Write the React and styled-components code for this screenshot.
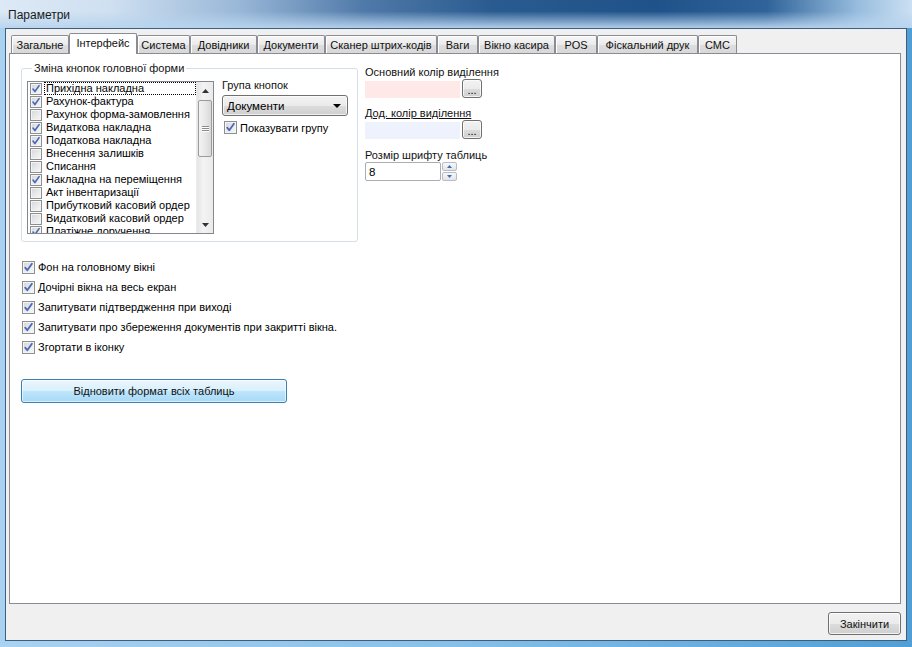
import React from "react";
import styled, { createGlobalStyle } from "styled-components";

const GlobalStyle = createGlobalStyle`
  html, body { margin: 0; padding: 0; }
  body {
    width: 912px;
    height: 647px;
    overflow: hidden;
    font-family: "Liberation Sans", Arial, sans-serif;
    font-size: 11px;
    color: #000;
  }
  * { box-sizing: border-box; }
`;

const Window = styled.div`
  width: 912px;
  height: 647px;
  display: flex;
  flex-direction: column;
  padding: 0 5px 6px 5px;
  background: linear-gradient(90deg, #a9d2f1 0%, #86c0ea 50%, #4f9fd6 100%);
`;

const TitleBar = styled.div`
  height: 28px;
  margin: 0 -5px;
  padding: 1px 8px 0;
  display: flex;
  align-items: center;
  font-size: 12px;
  color: #1a1a1a;
  background:
    linear-gradient(180deg, rgba(255,255,255,0) 0%, rgba(255,255,255,0) 40%, rgba(184,212,238,0.95) 100%),
    linear-gradient(90deg, #dde9f5 0%, #cfe0f1 12%, #9ab8d8 26%, #4f79a8 40%, #2a5b90 54%, #1f5289 72%, #2f6399 84%, #97bcde 94%, #cbe0f2 100%);
`;

const Client = styled.div`
  flex: 1;
  display: flex;
  flex-direction: column;
  border: 1px solid #3f5e7e;
  background: #f0f0f0;
  padding: 4px 5px 0 3px;
`;

const TabStrip = styled.div`
  display: flex;
  align-items: flex-end;
  height: 20px;
  padding-left: 2px;
`;

const Tab = styled.div`
  width: ${p => p.w}px;
  height: ${p => (p.active ? 21 : 18)}px;
  margin-bottom: ${p => (p.active ? -1 : 0)}px;
  position: relative;
  z-index: ${p => (p.active ? 1 : 0)};
  display: flex;
  align-items: center;
  justify-content: center;
  padding-bottom: ${p => (p.active ? 2 : 0)}px;
  border: 1px solid #898c95;
  border-bottom: none;
  border-radius: 2px 2px 0 0;
  white-space: nowrap;
  color: #111;
  background: ${p =>
    p.active
      ? "#ffffff"
      : "linear-gradient(180deg, #f7f7f7 0%, #ebebeb 50%, #dedede 51%, #d8d8d8 100%)"};
  box-shadow: ${p => (p.active ? "none" : "inset 1px 1px 0 #ffffff")};
`;

const Panel = styled.div`
  flex: 1;
  border: 1px solid #898c95;
  background: #fff;
  display: flex;
  flex-direction: column;
`;

const TopRow = styled.div`
  display: flex;
  align-items: flex-start;
  padding: 8px 0 0 11px;
`;

const GroupBox = styled.fieldset`
  width: 337px;
  margin: 0;
  padding: 6px 5px 7px 5px;
  border: 1px solid #d5dfe5;
  border-radius: 3px;
  display: flex;
  align-items: flex-start;
`;

const Legend = styled.legend`
  margin-left: 5px;
  padding: 0 2px;
  font-size: 11px;
  line-height: 13px;
  color: #111;
`;

const ListBox = styled.div`
  width: 187px;
  height: 153px;
  border: 1px solid #828790;
  display: flex;
  overflow: hidden;
`;

const ListItems = styled.div`
  flex: 1;
  padding: 0 0 0 2px;
  overflow: hidden;
`;

const ListRow = styled.div`
  height: 13px;
  display: flex;
  align-items: center;
  gap: 2px;
  white-space: nowrap;
`;

const ItemText = styled.span`
  flex: 1;
  height: 13px;
  line-height: 11px;
  padding-left: 1px;
  border: 1px ${p => (p.focused ? "dotted #000" : "solid transparent")};
`;

const ScrollBar = styled.div`
  width: 17px;
  display: flex;
  flex-direction: column;
  background: linear-gradient(90deg, #e5e5e5, #f3f3f3 40%, #eaeaea);
  border-left: 1px solid #ececec;
`;

const ScrollArrow = styled.div`
  height: 17px;
  display: flex;
  align-items: center;
  justify-content: center;
`;

const ScrollTrack = styled.div`
  flex: 1;
  padding: 1px 1px;
`;

const ScrollThumb = styled.div`
  height: 57px;
  border: 1px solid #9b9b9b;
  border-radius: 2px;
  background: linear-gradient(90deg, #f3f3f3 0%, #e8e8e8 50%, #d9d9d9 100%);
  display: flex;
  flex-direction: column;
  align-items: center;
  justify-content: center;
  gap: 1px;
`;

const Grip = styled.div`
  width: 7px;
  height: 1px;
  background: #8c8c8c;
  box-shadow: 0 1px 0 #fff;
`;

const MiddleCol = styled.div`
  margin-left: 8px;
  margin-top: -2px;
  display: flex;
  flex-direction: column;
`;

const FieldLabel = styled.div`
  height: 13px;
  line-height: 13px;
  white-space: nowrap;
  color: #111;
  text-decoration: ${p => (p.underline ? "underline" : "none")};
`;

const Combo = styled.div`
  width: 126px;
  height: 21px;
  margin-top: 3px;
  border: 1px solid #707070;
  border-radius: 3px;
  padding: 0 6px 0 4px;
  display: flex;
  align-items: center;
  justify-content: space-between;
  font-size: 11.5px;
  background: linear-gradient(180deg, #f2f2f2 0%, #ebebeb 50%, #dddddd 51%, #cfcfcf 100%);
  box-shadow: inset 0 0 0 1px rgba(255,255,255,0.7);
`;

const CheckRow = styled.div`
  display: flex;
  align-items: center;
  gap: 3px;
  height: ${p => p.h || 13}px;
  margin-top: ${p => p.mt || 0}px;
  margin-left: ${p => p.ml || 0}px;
  white-space: nowrap;
`;

const Box = styled.span`
  width: ${p => p.size}px;
  height: ${p => p.size}px;
  flex: none;
  border: 1px solid #8e8f8f;
  background: linear-gradient(135deg, #d3d5d8 0%, #e9eaeb 55%, #f7f7f7 100%);
  box-shadow: inset 0 0 0 1px #f4f4f4;
  display: flex;
  align-items: center;
  justify-content: center;
`;

const RightCol = styled.div`
  margin-left: 7px;
  margin-top: 4px;
  display: flex;
  flex-direction: column;
`;

const ColorRow = styled.div`
  display: flex;
  align-items: flex-end;
  gap: 2px;
  margin-bottom: ${p => p.mb || 0}px;
`;

const Swatch = styled.div`
  width: 95px;
  height: 17px;
  background: ${p => p.color};
`;

const SmallButton = styled.div`
  width: 20px;
  height: 19px;
  border: 1px solid #707070;
  border-radius: 3px;
  display: flex;
  align-items: flex-end;
  justify-content: center;
  padding-bottom: 3px;
  font-size: 11px;
  line-height: 8px;
  background: linear-gradient(180deg, #f2f2f2 0%, #ebebeb 50%, #dddddd 51%, #cfcfcf 100%);
  box-shadow: inset 0 0 0 1px rgba(255,255,255,0.75);
`;

const SpinRow = styled.div`
  display: flex;
  gap: 1px;
  margin-top: 0;
`;

const SpinInput = styled.div`
  width: 76px;
  height: 19px;
  border: 1px solid #abadb3;
  border-radius: 2px;
  padding-left: 3px;
  display: flex;
  align-items: center;
  font-size: 11.5px;
`;

const SpinButtons = styled.div`
  display: flex;
  flex-direction: column;
  gap: 1px;
`;

const SpinBtn = styled.div`
  width: 15px;
  height: 9px;
  border: 1px solid #b8bcc4;
  border-radius: 2px;
  background: linear-gradient(180deg, #f8f8f8, #e2e4e8);
  display: flex;
  align-items: center;
  justify-content: center;
`;

const Options = styled.div`
  margin-top: 15px;
  padding-left: 12px;
  display: flex;
  flex-direction: column;
`;

const WideButton = styled.div`
  width: 266px;
  height: 24px;
  margin: 22px 0 0 11px;
  border: 1px solid #3c7fb1;
  border-radius: 3px;
  display: flex;
  align-items: center;
  justify-content: center;
  font-size: 11px;
  color: #111;
  background: linear-gradient(180deg, #eaf6fd 0%, #d9f0fc 50%, #bee6fd 51%, #a7d9f5 100%);
  box-shadow: inset 0 0 0 1px rgba(255,255,255,0.6);
`;

const Footer = styled.div`
  height: 36px;
  display: flex;
  justify-content: flex-end;
  align-items: flex-start;
  padding-top: 8px;
`;

const DialogButton = styled.div`
  width: 73px;
  height: 23px;
  border: 1px solid #707070;
  border-radius: 3px;
  display: flex;
  align-items: center;
  justify-content: center;
  font-size: 11px;
  color: #111;
  background: linear-gradient(180deg, #f2f2f2 0%, #ebebeb 50%, #dddddd 51%, #cfcfcf 100%);
  box-shadow: inset 0 0 0 1px rgba(255,255,255,0.75);
`;

const tabs = [
  ["Загальне", 58],
  ["Інтерфейс", 68, true],
  ["Система", 53],
  ["Довідники", 67],
  ["Документи", 68],
  ["Сканер штрих-кодів", 112],
  ["Ваги", 41],
  ["Вікно касира", 77],
  ["POS", 42],
  ["Фіскальний друк", 101],
  ["СМС", 39],
];

const listItems = [
  ["Прихідна накладна", true],
  ["Рахунок-фактура", true],
  ["Рахунок форма-замовлення", false],
  ["Видаткова накладна", true],
  ["Податкова накладна", true],
  ["Внесення залишків", false],
  ["Списання", false],
  ["Накладна на переміщення", true],
  ["Акт інвентаризації", false],
  ["Прибутковий касовий ордер", false],
  ["Видатковий касовий ордер", false],
  ["Платіжне доручення", true],
];

const options = [
  "Фон на головному вікні",
  "Дочірні вікна на весь екран",
  "Запитувати підтвердження при виході",
  "Запитувати про збереження документів при закритті вікна.",
  "Згортати в іконку",
];

function CheckBox({ checked, size = 13 }) {
  return (
    <Box size={size}>
      {checked && (
        <svg width={size - 2} height={size - 2} viewBox="0 0 11 11">
          <path d="M2.2 5.6 L4.3 8.3 L8.9 1.8" fill="none" stroke="#4a68b8" strokeWidth="1.8" strokeLinecap="round" strokeLinejoin="round" />
        </svg>
      )}
    </Box>
  );
}

function Triangle({ up, color = "#000", w = 7, h = 4 }) {
  return (
    <svg width={w} height={h} viewBox={`0 0 ${w} ${h}`}>
      <polygon points={up ? `0,${h} ${w / 2},0 ${w},${h}` : `0,0 ${w},0 ${w / 2},${h}`} fill={color} />
    </svg>
  );
}

export default function App() {
  return (
    <>
      <GlobalStyle />
      <Window>
        <TitleBar>Параметри</TitleBar>
        <Client>
          <TabStrip>
            {tabs.map(([name, w, active]) => (
              <Tab key={name} w={w} active={active}>{name}</Tab>
            ))}
          </TabStrip>
          <Panel>
            <TopRow>
              <GroupBox>
                <Legend>Зміна кнопок головної форми</Legend>
                <ListBox>
                  <ListItems>
                    {listItems.map(([name, checked], i) => (
                      <ListRow key={name}>
                        <CheckBox checked={checked} size={12} />
                        <ItemText focused={i === 0}>{name}</ItemText>
                      </ListRow>
                    ))}
                  </ListItems>
                  <ScrollBar>
                    <ScrollArrow><Triangle up color="#333" /></ScrollArrow>
                    <ScrollTrack>
                      <ScrollThumb>
                        <Grip /><Grip /><Grip />
                      </ScrollThumb>
                    </ScrollTrack>
                    <ScrollArrow><Triangle color="#333" /></ScrollArrow>
                  </ScrollBar>
                </ListBox>
                <MiddleCol>
                  <FieldLabel>Група кнопок</FieldLabel>
                  <Combo>
                    <span>Документи</span>
                    <Triangle w={8} h={4} />
                  </Combo>
                  <CheckRow mt={5} ml={2}>
                    <CheckBox checked />
                    <span>Показувати групу</span>
                  </CheckRow>
                </MiddleCol>
              </GroupBox>
              <RightCol>
                <FieldLabel>Основний колір виділення</FieldLabel>
                <ColorRow mb={9}>
                  <Swatch color="#ffe8e8" />
                  <SmallButton>...</SmallButton>
                </ColorRow>
                <FieldLabel underline>Дод. колір виділення</FieldLabel>
                <ColorRow mb={10}>
                  <Swatch color="#eef2fd" />
                  <SmallButton>...</SmallButton>
                </ColorRow>
                <FieldLabel>Розмір шрифту таблиць</FieldLabel>
                <SpinRow>
                  <SpinInput>8</SpinInput>
                  <SpinButtons>
                    <SpinBtn><Triangle up color="#3d6fb6" w={5} h={3} /></SpinBtn>
                    <SpinBtn><Triangle color="#3d6fb6" w={5} h={3} /></SpinBtn>
                  </SpinButtons>
                </SpinRow>
              </RightCol>
            </TopRow>
            <Options>
              {options.map(o => (
                <CheckRow key={o} h={20}>
                  <CheckBox checked />
                  <span>{o}</span>
                </CheckRow>
              ))}
            </Options>
            <WideButton>Відновити формат всіх таблиць</WideButton>
          </Panel>
          <Footer>
            <DialogButton>Закінчити</DialogButton>
          </Footer>
        </Client>
      </Window>
    </>
  );
}
